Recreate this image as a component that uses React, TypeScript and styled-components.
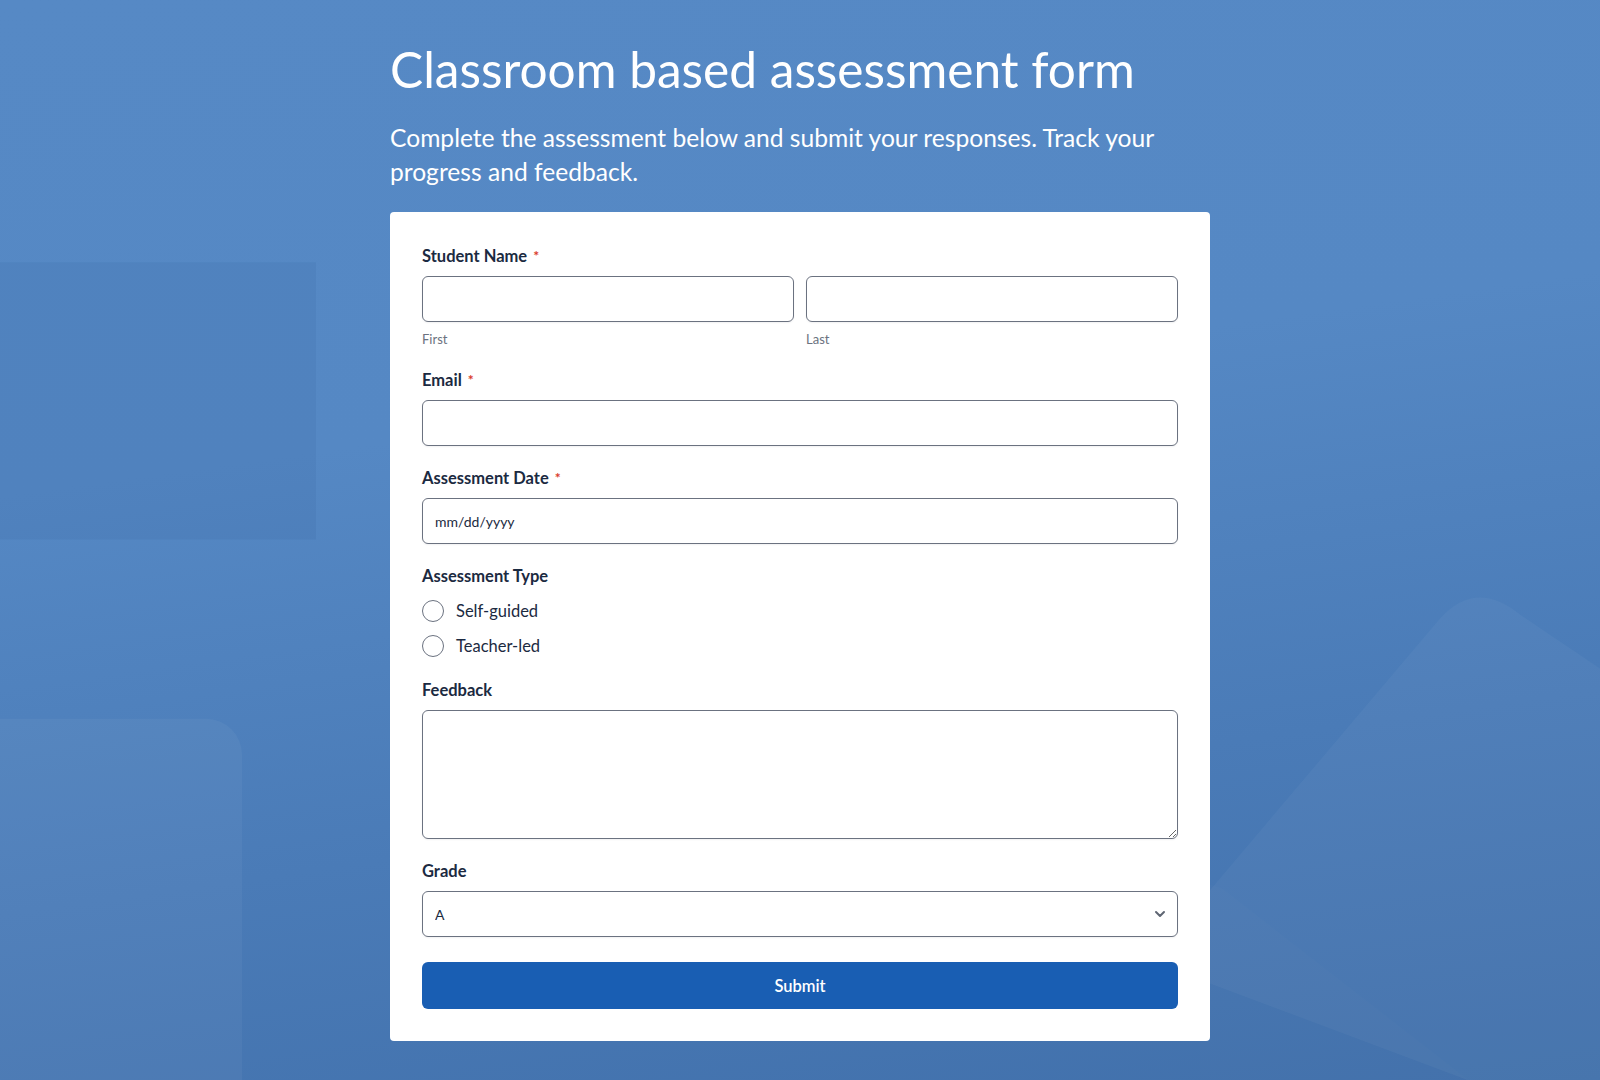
import React from 'react';
import styled, { createGlobalStyle } from 'styled-components';
import { ChevronDown } from 'lucide-react';

const GlobalStyle = createGlobalStyle`
  * {
    box-sizing: border-box;
  }

  body {
    margin: 0;
    font-family: Lato, "Noto Sans", sans-serif;
  }
`;

const Page = styled.main`
  position: relative;
  min-height: 100vh;
  overflow: hidden;
  display: flex;
  justify-content: center;
  background: linear-gradient(172deg, #5689c5 0%, #5588c4 38%, #4a7bb7 70%, #4170ab 100%);
`;

const Decor = styled.svg`
  position: absolute;
  inset: 0;
  width: 100%;
  height: 100%;
  pointer-events: none;
`;

const Content = styled.div`
  position: relative;
  z-index: 1;
  width: 820px;
  padding: 40px 0 40px;
`;

const Title = styled.h1`
  margin: 0;
  font-family: Lato, "Open Sans", sans-serif;
  font-weight: 400;
  font-size: 49.6px;
  line-height: 58px;
  color: #ffffff;
`;

const Lead = styled.p`
  margin: 23px 0 23px;
  max-width: 800px;
  font-family: Lato, "Open Sans", sans-serif;
  font-size: 24.6px;
  line-height: 34px;
  color: #ffffff;
`;

const Card = styled.form`
  display: flex;
  flex-direction: column;
  gap: 20px;
  padding: 32px 32px 32px;
  background: #ffffff;
  border-radius: 4px;
`;

const Field = styled.div`
  display: flex;
  flex-direction: column;
`;

const Label = styled.label`
  display: flex;
  align-items: center;
  gap: 6px;
  margin-bottom: 8px;
  font-size: 16.5px;
  line-height: 24px;
  font-weight: 700;
  color: #1b2a41;
`;

const Required = styled.span`
  color: #d93a2b;
  font-size: 14px;
  font-weight: 700;
`;

const NameRow = styled.div`
  display: grid;
  grid-template-columns: 1fr 1fr;
  gap: 12px;
`;

const SubField = styled.div`
  display: flex;
  flex-direction: column;
`;

const SubLabel = styled.span`
  margin-top: 8px;
  font-size: 13px;
  line-height: 18px;
  color: #6b7280;
`;

const control = `
  width: 100%;
  height: 46px;
  padding: 0 12px;
  border: 1px solid #6b7280;
  border-radius: 6px;
  background: #ffffff;
  box-shadow: 0 1px 2px rgba(16, 24, 40, 0.06);
  font-family: Lato, "Noto Sans", sans-serif;
  font-size: 14px;
  color: #1b2a41;
  outline: none;
`;

const TextInput = styled.input`
  ${control}

  &::placeholder {
    color: #1b2a41;
    opacity: 1;
  }
`;

const RadioGroup = styled.div`
  display: flex;
  flex-direction: column;
  gap: 11px;
  padding-top: 3px;
`;

const RadioRow = styled.label`
  display: flex;
  align-items: center;
  gap: 12px;
  height: 24px;
  font-size: 16.5px;
  color: #1b2a41;
  cursor: pointer;
`;

const RadioCircle = styled.input`
  appearance: none;
  margin: 0;
  width: 22px;
  height: 22px;
  border: 1px solid #6b7280;
  border-radius: 50%;
  background: #ffffff;

  &:checked {
    border: 6px solid #195eb3;
  }
`;

const TextArea = styled.textarea`
  ${control}
  height: 129px;
  padding: 10px 12px;
  resize: vertical;
`;

const SelectWrap = styled.div`
  position: relative;
`;

const Select = styled.select`
  ${control}
  appearance: none;
  cursor: pointer;
`;

const Chevron = styled(ChevronDown)`
  position: absolute;
  right: 10px;
  top: 50%;
  transform: translateY(-50%);
  color: #5f6673;
  pointer-events: none;
`;

const SubmitButton = styled.button`
  margin-top: 5px;
  height: 47px;
  border: none;
  border-radius: 6px;
  background: #195eb3;
  color: #ffffff;
  font-family: Lato, "Noto Sans", sans-serif;
  font-size: 16.5px;
  font-weight: 600;
  cursor: pointer;
`;

const BackgroundShapes = () => (
  <Decor viewBox="0 0 1600 1080" preserveAspectRatio="none" aria-hidden="true">
    <rect x="0" y="262" width="316" height="277" fill="#12366e" opacity="0.07" />
    <rect x="-40" y="718" width="282" height="420" rx="36" fill="#ffffff" opacity="0.045" />
    <path
      d="M1150 960 L1440 618 Q1476 578 1520 614 L1600 668 L1600 1080 L1470 1080 Z"
      fill="#ffffff"
      opacity="0.035"
    />
    <path d="M1200 880 L1223 888 L1470 1080 L1200 1080 Z" fill="#ffffff" opacity="0.012" />
  </Decor>
);

const App = () => {
  return (
    <>
      <GlobalStyle />
      <Page>
        <BackgroundShapes />
        <Content>
          <Title>Classroom based assessment form</Title>
          <Lead>
            Complete the assessment below and submit your responses. Track your progress and feedback.
          </Lead>
          <Card onSubmit={(e) => e.preventDefault()}>
            <Field>
              <Label>
                Student Name <Required>*</Required>
              </Label>
              <NameRow>
                <SubField>
                  <TextInput type="text" aria-label="First" />
                  <SubLabel>First</SubLabel>
                </SubField>
                <SubField>
                  <TextInput type="text" aria-label="Last" />
                  <SubLabel>Last</SubLabel>
                </SubField>
              </NameRow>
            </Field>

            <Field>
              <Label htmlFor="email">
                Email <Required>*</Required>
              </Label>
              <TextInput id="email" type="email" />
            </Field>

            <Field>
              <Label htmlFor="date">
                Assessment Date <Required>*</Required>
              </Label>
              <TextInput id="date" type="text" placeholder="mm/dd/yyyy" />
            </Field>

            <Field>
              <Label as="span">Assessment Type</Label>
              <RadioGroup>
                <RadioRow>
                  <RadioCircle type="radio" name="type" value="self" />
                  Self-guided
                </RadioRow>
                <RadioRow>
                  <RadioCircle type="radio" name="type" value="teacher" />
                  Teacher-led
                </RadioRow>
              </RadioGroup>
            </Field>

            <Field>
              <Label htmlFor="feedback">Feedback</Label>
              <TextArea id="feedback" />
            </Field>

            <Field>
              <Label htmlFor="grade">Grade</Label>
              <SelectWrap>
                <Select id="grade" defaultValue="A">
                  <option>A</option>
                  <option>B</option>
                  <option>C</option>
                  <option>D</option>
                  <option>F</option>
                </Select>
                <Chevron size={16} strokeWidth={3} />
              </SelectWrap>
            </Field>

            <SubmitButton type="submit">Submit</SubmitButton>
          </Card>
        </Content>
      </Page>
    </>
  );
};

export default App;
